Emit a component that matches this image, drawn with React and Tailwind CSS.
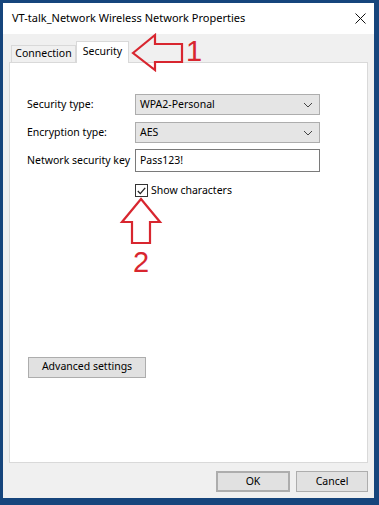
import React from "react";

const font = { fontFamily: '"Segoe UI", "Noto Sans", "Open Sans", sans-serif' };

const Chevron = () => (
  <svg width="10" height="6" viewBox="0 0 10 6" className="text-[#444]">
    <path d="M1 1 L5 5 L9 1" fill="none" stroke="currentColor" strokeWidth="1" />
  </svg>
);

const Select = ({ value }) => (
  <div className="flex h-[21px] w-[185px] items-center justify-between border border-[#adadad] bg-[#e5e5e5] pl-[4px] pr-[6px] text-[10.5px] text-black">
    <span>{value}</span>
    <Chevron />
  </div>
);

const Row = ({ label, children, className = "" }) => (
  <div className={"flex items-center " + className}>
    <div className="w-[108px] whitespace-nowrap text-[10.5px] text-black">{label}</div>
    {children}
  </div>
);

const WinButton = ({ children, className = "" }) => (
  <div
    className={
      "flex h-[21px] items-center justify-center border border-[#adadad] bg-[#e1e1e1] text-[10.5px] text-black " +
      className
    }
  >
    {children}
  </div>
);

const App = () => {
  return (
    <div
      className="relative flex h-[505px] w-[379px] bg-[#16457c] pb-[7px] pl-[3px] pr-[5px] pt-[3px]"
      style={font}
    >
      <div className="flex flex-1 flex-col bg-[#f0f0f0]">
        {/* title bar */}
        <div className="flex h-[31px] items-center justify-between bg-white pl-[9px] pr-[8px]">
          <span className="text-[11px] text-black">VT-talk_Network Wireless Network Properties</span>
          <svg width="11" height="11" viewBox="0 0 11 11">
            <path d="M0.5 0.5 L10.5 10.5 M10.5 0.5 L0.5 10.5" stroke="#111" strokeWidth="1" />
          </svg>
        </div>

        <div className="flex flex-1 flex-col px-[6px] pt-[7px]">
          {/* tabs */}
          <div className="relative z-10 flex h-[21px] items-end pl-[2px]">
            <div className="flex h-[17px] w-[65px] items-center justify-center border border-b-0 border-[#d9d9d9] bg-[#f0f0f0] text-[10.5px] text-black">
              Connection
            </div>
            <div className="-mb-px flex h-[22px] w-[53px] items-start justify-center border border-b-0 border-[#d9d9d9] bg-white pt-[2px] text-[10.5px] text-black">
              Security
            </div>
          </div>

          {/* panel */}
          <div className="flex h-[401px] flex-col border border-[#d9d9d9] bg-white pl-[17px] pt-[31px]">
            <Row label="Security type:">
              <Select value="WPA2-Personal" />
            </Row>
            <Row label="Encryption type:" className="mt-[7px]">
              <Select value="AES" />
            </Row>
            <Row label="Network security key" className="mt-[6px]">
              <div className="flex h-[23px] w-[185px] items-center border border-[#7a7a7a] bg-white pl-[4px] text-[10.5px] text-black">
                Pass123!
              </div>
            </Row>
            <div className="ml-[108px] mt-[11px] flex items-center gap-[3px]">
              <div className="flex h-[13px] w-[13px] items-center justify-center border border-[#333] bg-white">
                <svg width="9" height="8" viewBox="0 0 9 8">
                  <path d="M0.8 4 L3.3 6.6 L8.2 0.8" fill="none" stroke="#222" strokeWidth="1.3" />
                </svg>
              </div>
              <span className="text-[10.5px] text-black">Show characters</span>
            </div>

            <WinButton className="ml-[1px] mt-[158px] w-[118px]">Advanced settings</WinButton>
          </div>

          {/* bottom buttons */}
          <div className="flex justify-end gap-[6px] pt-[8px]">
            <WinButton className="w-[74px] border-2 border-[#0078d7]">OK</WinButton>
            <WinButton className="w-[72px]">Cancel</WinButton>
          </div>
        </div>
      </div>

      {/* annotation: arrow 1 */}
      <svg className="absolute left-[128px] top-[32px]" width="82" height="44" viewBox="0 0 82 44">
        <path
          d="M5 21 L27 3 L27 12 L54 12 L54 30 L27 30 L27 38 Z"
          fill="none"
          stroke="#d8262f"
          strokeWidth="2.2"
          strokeLinejoin="miter"
        />
      </svg>
      <span
        className="absolute left-[186px] top-[37px] text-[29px] leading-none text-[#d8262f]"
        style={{ fontFamily: '"Liberation Sans", Arial, sans-serif' }}
      >
        1
      </span>

      {/* annotation: arrow 2 */}
      <svg className="absolute left-[119px] top-[196px]" width="44" height="50" viewBox="0 0 44 50">
        <path
          d="M22 3 L41 26 L31 26 L31 47 L13 47 L13 26 L3 26 Z"
          fill="none"
          stroke="#d8262f"
          strokeWidth="2.2"
        />
      </svg>
      <span
        className="absolute left-[133px] top-[248px] text-[29px] leading-none text-[#d8262f]"
        style={{ fontFamily: '"Liberation Sans", Arial, sans-serif' }}
      >
        2
      </span>
    </div>
  );
};

export default App;
